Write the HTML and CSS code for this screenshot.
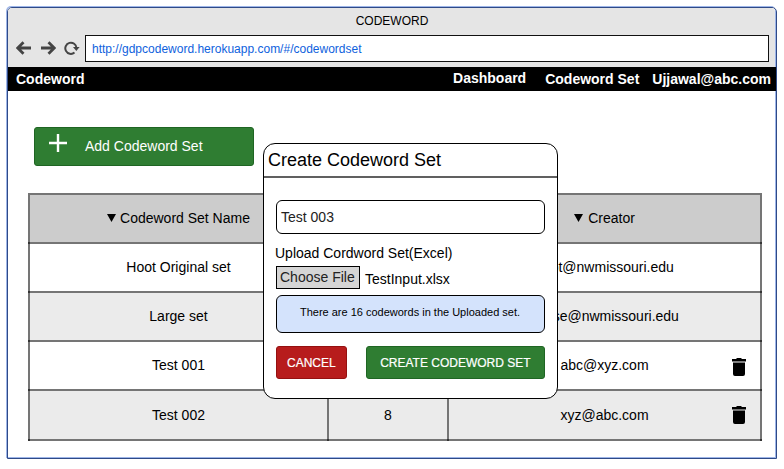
FILE: index.html
```html
<!DOCTYPE html>
<html lang="en">
<head>
<meta charset="utf-8">
<title>Codeword</title>
<link rel="stylesheet" href="styles.css">
</head>
<body>
<div class="window">
  <header class="chrome">
    <div class="chrome-title">CODEWORD</div>
    <div class="chrome-bar">
      <svg class="arrow" viewBox="0 0 16 14"><path d="M15 7H2M7.5 1.2L1.7 7l5.8 5.8"/></svg>
      <svg class="arrow" viewBox="0 0 16 14"><path d="M1 7h13M8.5 1.2L14.3 7l-5.8 5.8"/></svg>
      <svg class="reload" viewBox="0 0 16 14"><path class="ring" d="M10.5 11.6A5.6 5.6 0 1 1 12.5 7"/><path class="tip" d="M9 6h6.6L12.3 10z"/></svg>
      <div class="url">http://gdpcodeword.herokuapp.com/#/codewordset</div>
    </div>
  </header>
  <nav class="nav">
    <span class="brand">Codeword</span>
    <span class="dash">Dashboard</span>
    <span class="sets">Codeword Set</span>
    <span class="user">Ujjawal@abc.com</span>
  </nav>
  <main class="content">
    <button class="btn add">
      <svg class="plus" viewBox="0 0 18 18"><path d="M9 0v18M0 9h18"/></svg>
      <span>Add Codeword Set</span>
    </button>
    <div class="table">
      <div class="cell first head"><svg class="sort" viewBox="0 0 9 8"><path d="M0 0h9L4.5 8z"/></svg><span>Codeword Set Name</span></div>
      <div class="cell head"></div>
      <div class="cell head creator"><svg class="sort" viewBox="0 0 9 8"><path d="M0 0h9L4.5 8z"/></svg><span>Creator</span></div>
      <div class="cell first">Hoot Original set</div>
      <div class="cell"></div>
      <div class="cell">hoot@nwmissouri.edu</div>
      <div class="cell first alt">Large set</div>
      <div class="cell alt"></div>
      <div class="cell alt">chase@nwmissouri.edu</div>
      <div class="cell first">Test 001</div>
      <div class="cell"></div>
      <div class="cell">abc@xyz.com<svg class="trash" viewBox="0 0 14 18"><path d="M0 1h4l1-1h4l1 1h4v2.5H0zM1 4.5h12V16a2 2 0 0 1-2 2H3a2 2 0 0 1-2-2z"/></svg></div>
      <div class="cell first alt last">Test 002</div>
      <div class="cell alt last">8</div>
      <div class="cell alt last">xyz@abc.com<svg class="trash" viewBox="0 0 14 18"><path d="M0 1h4l1-1h4l1 1h4v2.5H0zM1 4.5h12V16a2 2 0 0 1-2 2H3a2 2 0 0 1-2-2z"/></svg></div>
    </div>
  </main>
</div>
<section class="modal">
  <h2 class="modal-title">Create Codeword Set</h2>
  <div class="modal-body">
    <div class="input">Test 003</div>
    <div class="label">Upload Cordword Set(Excel)</div>
    <div class="file"><span class="choose">Choose File</span><span class="filename">TestInput.xlsx</span></div>
    <div class="info">There are 16 codewords in the Uploaded set.</div>
    <div class="actions">
      <button class="btn cancel">CANCEL</button>
      <button class="btn create">CREATE CODEWORD SET</button>
    </div>
  </div>
</section>
</body>
</html>
```
FILE: styles.css
```css
* { box-sizing: border-box; }
body {
  margin: 0;
  padding: 7px;
  height: 469px;
  overflow: hidden;
  background: #fff;
  color: #000;
  font: 14px/16px "Liberation Sans", Arial, sans-serif;
}
.window {
  width: 770px;
  height: 452px;
  border: 1px solid #2f4a87;
  border-radius: 5px 5px 0 0;
  padding-right: 1px;
  box-shadow: -1px -1px 0 #9db5e8, inset -1px -1px 0 #9db5e8;
}
.chrome { height: 59px; background: #e5e5e5; border-radius: 4px 4px 0 0; }
.chrome-title { height: 27px; padding: 5px 0 0 1px; text-align: center; font-size: 12px; }
.chrome-bar { display: flex; align-items: center; padding: 0 6px 0 8px; }
.arrow { width: 16px; height: 14px; margin: -2px 8px 0 0; fill: none; stroke: #444; stroke-width: 2.8; }
.reload { width: 16px; height: 14px; margin: -2px 5px 0 0; }
.ring { fill: none; stroke: #444; stroke-width: 2; }
.tip { fill: #444; }
.url {
  flex: 1;
  height: 27px;
  border: 1px solid #111;
  background: #fff;
  padding: 5px 6px;
  color: #0f62dd;
  font-size: 12px;
}
.nav {
  display: flex;
  align-items: center;
  height: 24px;
  background: #000;
  color: #fff;
  padding: 0 5px 0 8px;
  font-weight: bold;
  margin-right: -1px;
}
.brand { margin-right: auto; }
.dash { margin-right: 19px; padding-bottom: 2px; }
.sets { margin-right: 13px; }
.content { padding: 36px 0 0 20px; }
.btn {
  display: flex;
  align-items: center;
  justify-content: center;
  border-radius: 3px;
  color: #fff;
  font: inherit;
  padding: 0;
}
.add {
  width: 220px;
  height: 39px;
  margin-left: 6px;
  justify-content: flex-start;
  padding: 0 0 1px 14px;
  background: #2f7d32;
  border: 1px solid #1f6523;
}
.plus { width: 18px; height: 18px; margin: -6px 18px 0 0; fill: none; stroke: #fff; stroke-width: 2.4; }
.table {
  display: grid;
  grid-template-columns: 297px 118px 311px;
  grid-template-rows: 47px 47px 47px 47px 48px;
  gap: 2px;
  padding: 2px;
  width: 734px;
  margin-top: 27px;
  background: #757575;
}
.cell {
  position: relative;
  display: flex;
  align-items: center;
  justify-content: center;
  padding-bottom: 2px;
  background: #fff;
}
.last { padding-bottom: 0; }
.creator .sort { margin-right: 5px; }
.cell::after, .first::before {
  content: "";
  position: absolute;
  right: -2px;
  bottom: -2px;
  width: 2px;
  height: 2px;
  background: #333;
}
.first::before { right: auto; left: -2px; }
.alt { background: #ebebeb; }
.head { background: #ccc; }
.sort { width: 9px; height: 8px; margin: 1px 4px 0 0; }
.trash { position: absolute; left: 283px; top: 16px; width: 14px; height: 18px; }
.last .trash { top: 15px; }
.modal {
  position: absolute;
  left: 263px;
  top: 143px;
  width: 295px;
  height: 256px;
  border: 1px solid #000;
  border-radius: 12px;
  background: #fff;
}
.modal-title {
  margin: 0;
  height: 34px;
  padding: 6px 4px 0;
  border-bottom: 2px solid #606060;
  font-weight: normal;
  font-size: 18px;
  line-height: 20px;
}
.modal-body { padding: 22px 12px 0; }
.input { width: 269px; height: 34px; padding: 8px 4px; border: 1px solid #000; border-radius: 6px; color: #222; }
.label { margin: 11px 0 0 -1px; height: 21px; }
.file { display: flex; height: 23px; }
.choose { width: 84px; border: 1px solid #000; background: #d5d5d5; color: #222; padding: 2px 3px; white-space: nowrap; }
.filename { padding: 5px 0 0 5px; }
.info {
  width: 269px;
  height: 38px;
  margin-top: 6px;
  padding: 8px 1px 0 0;
  border: 1px solid #000;
  border-radius: 6px;
  background: #d4e3fc;
  text-align: center;
  font-size: 11px;
}
.actions { display: flex; gap: 19px; margin-top: 13px; font-size: 12px; }
.actions .btn { height: 33px; -webkit-text-stroke: 0.2px #fff; }
.cancel { width: 71px; background: #b71c1c; border: 1px solid #941010; }
.create { width: 180px; background: #2f7d32; border: 1px solid #1f6523; }
```
